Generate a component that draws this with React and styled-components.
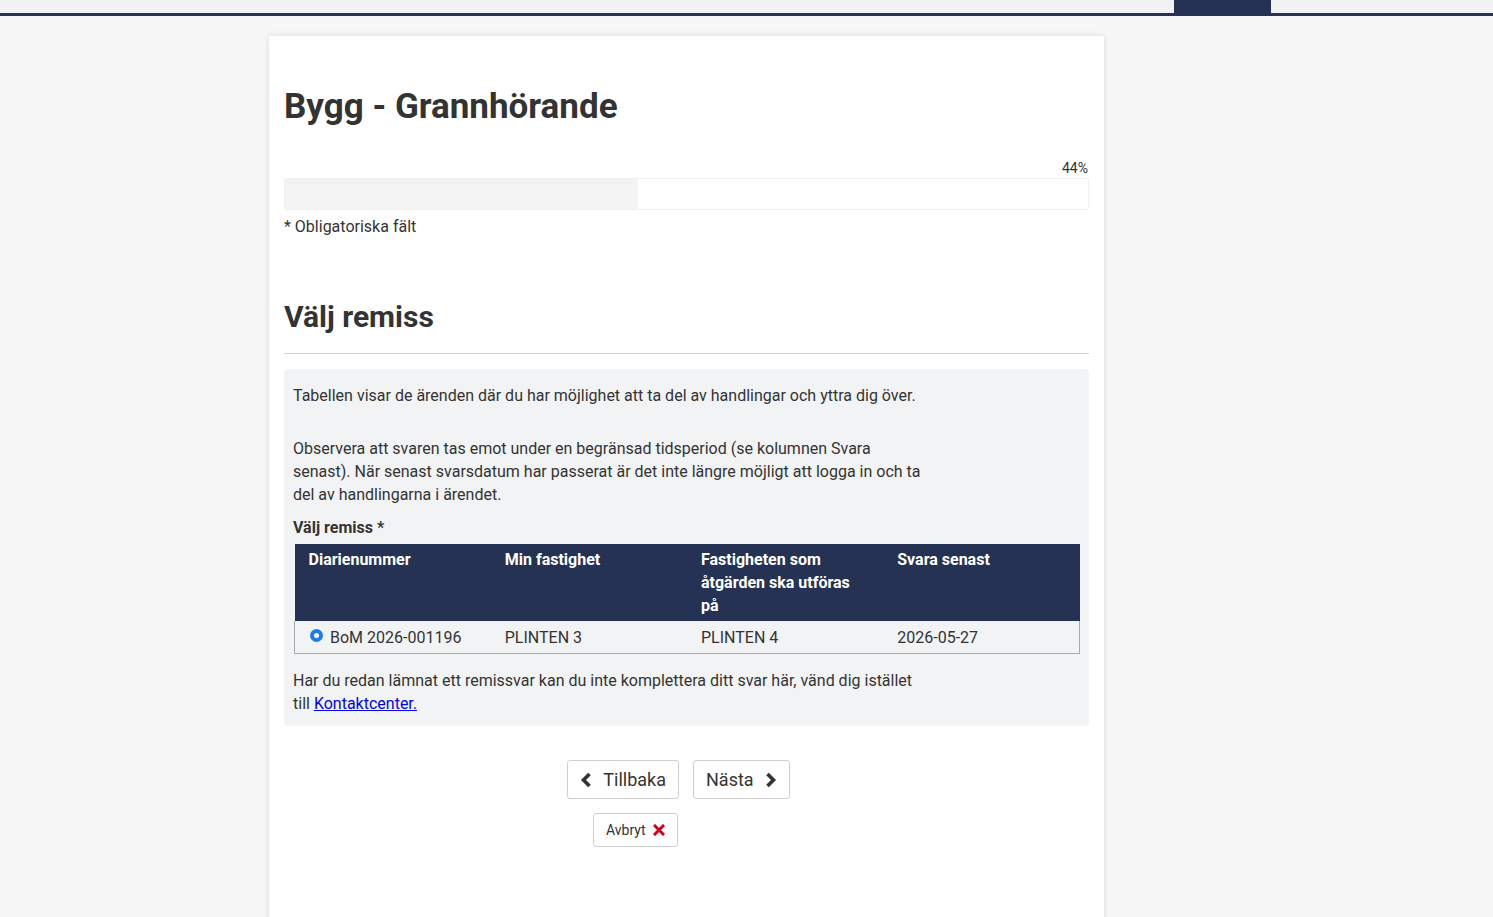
import React from "react";
import styled, { createGlobalStyle } from "styled-components";

const Global = createGlobalStyle`
  html, body { margin: 0; padding: 0; }
  body {
    background: #f7f7f7;
    font-family: Roboto, "Liberation Sans", Arial, sans-serif;
    color: #333;
    -webkit-font-smoothing: antialiased;
  }
  * { box-sizing: border-box; }
`;

const Header = styled.header`
  height: 16px;
  background: #f1f2f4;
  border-bottom: 3px solid #263253;
  display: flex;
  justify-content: flex-end;
  padding-right: 222px;
`;

const HeaderTab = styled.div`
  width: 97px;
  height: 13px;
  background: #263253;
`;

const Page = styled.main`
  display: flex;
  justify-content: flex-start;
  padding: 20px 0 0 269px;
`;

const Card = styled.section`
  width: 835px;
  min-height: 900px;
  background: #fff;
  box-shadow: 0 0 6px rgba(0, 0, 0, 0.12);
  padding: 46px 15px 40px;
`;

const Title = styled.h1`
  margin: 0;
  font-size: 35px;
  line-height: 50px;
  font-weight: 700;
  color: #333;
`;

const ProgressLabel = styled.div`
  margin-top: 28px;
  text-align: right;
  font-size: 14px;
  line-height: 17px;
  padding-right: 1px;
  color: #333;
`;

const ProgressTrack = styled.div`
  margin-top: 1px;
  height: 32px;
  border: 1px solid #f0f0f0;
  border-radius: 3px;
  background: #fff;
  overflow: hidden;
`;

const ProgressFill = styled.div`
  height: 100%;
  background: #f3f3f3;
`;

const Required = styled.p`
  margin: 7px 0 0;
  font-size: 16px;
  line-height: 20px;
`;

const SectionTitle = styled.h2`
  margin: 60px 0 0;
  font-size: 30px;
  line-height: 40px;
  font-weight: 700;
  padding-bottom: 16px;
  border-bottom: 1px solid #d0d0d0;
`;

const InfoBox = styled.div`
  margin-top: 15px;
  background: #f2f3f5;
  border-radius: 4px;
  padding: 15px 10px 11px 9px;
  font-size: 16px;
  line-height: 23px;
`;

const Para = styled.p`
  margin: 0 0 ${(p) => p.$gap || 0}px;
  max-width: ${(p) => (p.$narrow ? "632px" : "none")};
`;

const FieldLabel = styled.div`
  font-weight: 700;
  font-size: 16px;
  line-height: 20px;
  margin: 12px 0 6px;
`;

const Table = styled.table`
  width: 786px;
  margin-left: 1px;
  border-collapse: collapse;
  table-layout: fixed;
`;

const Th = styled.th`
  background: #263253;
  color: #fff;
  text-align: left;
  vertical-align: top;
  font-weight: 700;
  font-size: 16px;
  line-height: 23px;
  padding: 4px 24px 4px 14px;
`;

const Row = styled.tr`
  border: 1px solid #a9a9a9;
  border-top: none;
`;

const Td = styled.td`
  font-size: 16px;
  line-height: 21px;
  padding: 6px 14px 5px;
  color: #333;
  vertical-align: middle;
`;

const RadioCell = styled.div`
  display: flex;
  align-items: center;
  gap: 7px;
  margin-left: 1px;
`;

const Radio = styled.span`
  flex: none;
  width: 13px;
  height: 13px;
  border-radius: 50%;
  background: #1a7cf5;
  display: flex;
  align-items: center;
  justify-content: center;
  position: relative;
  top: -2px;
  &::after {
    content: "";
    width: 5px;
    height: 5px;
    border-radius: 50%;
    background: #fff;
  }
`;

const Link = styled.a`
  color: #0000ee;
  text-decoration: underline;
`;

const Actions = styled.div`
  margin-top: 34px;
  display: flex;
  flex-direction: column;
  align-items: center;
  gap: 14px;
`;

const ButtonRow = styled.div`
  display: flex;
  gap: 14px;
  margin-right: 16px;
`;

const Button = styled.button`
  display: inline-flex;
  align-items: center;
  gap: ${(p) => (p.$small ? "7px" : "11px")};
  height: ${(p) => (p.$small ? "34px" : "39px")};
  padding: 0 12px;
  font-family: Roboto, "Liberation Sans", Arial, sans-serif;
  font-size: ${(p) => (p.$small ? "14px" : "18px")};
  color: #333;
  background: #fff;
  border: 1px solid #cfcfcf;
  border-radius: 3px;
  cursor: pointer;
`;

const SmallRow = styled.div`
  width: 223px;
  margin-right: 16px;
  padding-left: 26px;
  display: flex;
`;

const Chevron = ({ dir }) => (
  <svg width="12" height="16" viewBox="0 0 12 16" aria-hidden="true">
    <path
      d={dir === "left" ? "M9.5 2 L3.5 8 L9.5 14" : "M2.5 2 L8.5 8 L2.5 14"}
      fill="none"
      stroke="#333"
      strokeWidth="3.6"
      strokeLinejoin="miter"
      strokeLinecap="butt"
    />
  </svg>
);

const Cross = () => (
  <svg width="12" height="12" viewBox="0 0 12 12" aria-hidden="true">
    <path d="M2 2 L10 10 M10 2 L2 10" stroke="#d0021b" strokeWidth="3" strokeLinecap="square" />
  </svg>
);

const columns = ["Diarienummer", "Min fastighet", "Fastigheten som åtgärden ska utföras på", "Svara senast"];

export default function App() {
  return (
    <>
      <Global />
      <Header>
        <HeaderTab />
      </Header>
      <Page>
        <Card>
          <Title>Bygg - Grannhörande</Title>
          <ProgressLabel>44%</ProgressLabel>
          <ProgressTrack>
            <ProgressFill style={{ width: "44%" }} />
          </ProgressTrack>
          <Required>* Obligatoriska fält</Required>
          <SectionTitle>Välj remiss</SectionTitle>
          <InfoBox>
            <Para $gap={30}>
              Tabellen visar de ärenden där du har möjlighet att ta del av handlingar och yttra dig över.
            </Para>
            <Para $narrow>
              Observera att svaren tas emot under en begränsad tidsperiod (se kolumnen Svara senast). När senast svarsdatum har passerat är det inte längre möjligt att logga in och ta del av handlingarna i ärendet.
            </Para>
            <FieldLabel>Välj remiss *</FieldLabel>
            <Table>
              <thead>
                <tr>
                  {columns.map((c) => (
                    <Th key={c}>{c}</Th>
                  ))}
                </tr>
              </thead>
              <tbody>
                <Row>
                  <Td>
                    <RadioCell>
                      <Radio />
                      <span>BoM 2026-001196</span>
                    </RadioCell>
                  </Td>
                  <Td>PLINTEN 3</Td>
                  <Td>PLINTEN 4</Td>
                  <Td>2026-05-27</Td>
                </Row>
              </tbody>
            </Table>
            <Para $narrow style={{ marginTop: 15 }}>
              Har du redan lämnat ett remissvar kan du inte komplettera ditt svar här, vänd dig istället till{" "}
              <Link href="#">Kontaktcenter.</Link>
            </Para>
          </InfoBox>
          <Actions>
            <ButtonRow>
              <Button>
                <Chevron dir="left" />
                Tillbaka
              </Button>
              <Button>
                Nästa
                <Chevron dir="right" />
              </Button>
            </ButtonRow>
            <SmallRow>
              <Button $small>
                Avbryt
                <Cross />
              </Button>
            </SmallRow>
          </Actions>
        </Card>
      </Page>
    </>
  );
}
